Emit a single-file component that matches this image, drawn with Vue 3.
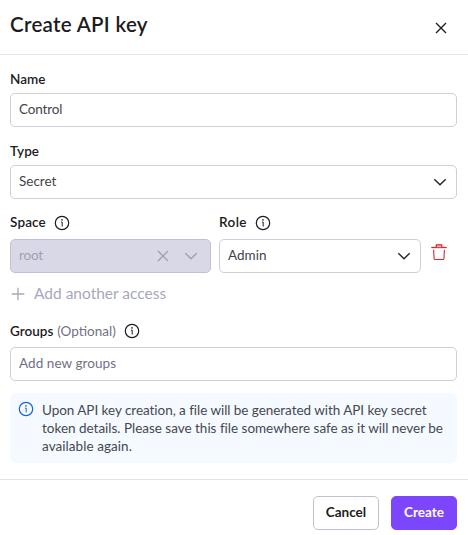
<script setup>
import { h } from 'vue'

const InfoIcon = () =>
  h('svg', { width: 16, height: 16, viewBox: '0 0 16 16', fill: 'none', stroke: 'currentColor' }, [
    h('circle', { cx: 8, cy: 8, r: 6.7, 'stroke-width': 1.2 }),
    h('path', { d: 'M7 7.1h1.2v4.4', 'stroke-width': 1 }),
    h('circle', { cx: 8, cy: 4.9, r: 0.8, fill: 'currentColor', stroke: 'none' }),
  ])

const ChevronIcon = () =>
  h('svg', { width: 16, height: 16, viewBox: '0 0 16 16', fill: 'none', stroke: 'currentColor' }, [
    h('path', { d: 'M2.3 5.2L8 10.8l5.7-5.6', 'stroke-width': 1.4 }),
  ])

const CloseIcon = () =>
  h('svg', { width: 16, height: 16, viewBox: '0 0 16 16', fill: 'none', stroke: 'currentColor' }, [
    h('path', { d: 'M3 3l10 10M13 3L3 13', 'stroke-width': 1.35 }),
  ])
</script>

<template>
  <section class="dialog">
    <header class="header">
      <h1 class="title">Create API key</h1>
      <CloseIcon class="close" />
    </header>

    <main class="body">
      <label class="label">Name</label>
      <div class="control"><span class="value control-name">Control</span></div>

      <label class="label spaced"><span class="type">Type</span></label>
      <div class="control">
        <span class="value">Secret</span>
        <ChevronIcon />
      </div>

      <div class="access">
        <div class="column">
          <label class="label"><span class="space">Space</span><InfoIcon /></label>
          <div class="control disabled">
            <span class="value root">root</span>
            <span class="tools"><CloseIcon /><ChevronIcon /></span>
          </div>
        </div>
        <div class="column">
          <label class="label"><span class="role">Role</span><InfoIcon /></label>
          <div class="control">
            <span class="value">Admin</span>
            <ChevronIcon />
          </div>
        </div>
        <svg class="trash" width="16" height="18" viewBox="0 0 16 18" fill="none" stroke="currentColor">
          <path d="M.3 4.5h15.4" stroke-width="1.3" />
          <path d="M5.3 4.2V1.8h5.4v2.4" stroke-width="1.2" fill="#f6bcc0" />
          <path d="M2.6 6.7l.5 9q.1.8.9.8h8q.8 0 .9-.8l.5-9" stroke-width="1.1" />
        </svg>
      </div>

      <div class="add">
        <svg width="16" height="16" viewBox="0 0 16 16" fill="none" stroke="currentColor">
          <path d="M8 1.7v12.6M1.7 8h12.6" stroke-width="1.3" />
        </svg>
        <span>Add another access</span>
      </div>

      <label class="label groups">
        Groups<span class="optional">(Optional)</span><InfoIcon />
      </label>
      <div class="control placeholder"><span class="value new-groups">Add new groups</span></div>

      <div class="alert">
        <InfoIcon class="alert-icon" />
        <p class="message">
          <span class="first">Upon API key creation, a file will be generated with API key secret</span>
          <span class="second">token details. Please save this file somewhere safe as it will never be</span>
          <span class="last">available again.</span>
        </p>
      </div>
    </main>

    <footer class="footer">
      <button class="button">Cancel</button>
      <button class="button primary">Create</button>
    </footer>
  </section>
</template>

<style>
body {
  background: #fff;
}
</style>

<style scoped>
.dialog {
  box-sizing: border-box;
  width: 468px;
  height: 535px;
  overflow: hidden;
  background: #fff;
  color: #1c1c22;
  font: 400 13.5px/20px Lato, "Open Sans", sans-serif;
  white-space: nowrap;
}
svg {
  display: block;
  flex: none;
}
.header {
  display: flex;
  justify-content: space-between;
  box-sizing: border-box;
  height: 55px;
  padding: 10px 19px 0 10px;
  border-bottom: 1px solid #e5e5ea;
}
.title {
  margin: 0;
  font-size: 20.5px;
  line-height: 28px;
  font-weight: 600;
  letter-spacing: 0.3px;
}
.close {
  margin-top: 10px;
}
.body {
  box-sizing: border-box;
  height: 424px;
  padding: 14px 11px 0 10px;
}
.label {
  display: flex;
  align-items: center;
  height: 20px;
  margin-bottom: 4px;
  font-weight: 600;
}
.label.spaced {
  margin-top: 14px;
}
.type {
  letter-spacing: 0.1px;
}
.space {
  letter-spacing: 0.15px;
}
.role {
  letter-spacing: 0.4px;
}
.label svg {
  margin-left: 8px;
}
.control {
  display: flex;
  align-items: center;
  justify-content: space-between;
  box-sizing: border-box;
  height: 34px;
  padding: 0 8px;
  border: 1px solid #cfcedb;
  border-radius: 5px;
  color: #25252a;
}
.value {
  margin-bottom: 2px;
  color: #44444a;
}
.control-name {
  letter-spacing: -0.15px;
}
.control.disabled {
  background: #d9d8e7;
  border-color: #c1bfd2;
  color: #a19fb5;
}
.disabled .value {
  color: #a19fb5;
  letter-spacing: -0.2px;
}
.placeholder .value {
  color: #737085;
}
.new-groups {
  letter-spacing: 0.06px;
}
.tools {
  display: flex;
  gap: 12px;
  margin-right: 3px;
}
.access {
  display: grid;
  grid-template-columns: 201px 202px 16px;
  column-gap: 8px;
  margin-top: 13px;
}
.access .label {
  height: 21px;
  margin-bottom: 6px;
}
.access .label span {
  margin-bottom: 2px;
}
.trash {
  margin: 31px 0 0 2px;
  color: #dc2430;
}
.add {
  display: flex;
  align-items: center;
  gap: 8px;
  height: 20px;
  margin-top: 11px;
  color: #a9a7bd;
  font-size: 15.5px;
}
.add span {
  margin-bottom: 2px;
}
.label.groups {
  margin-top: 17px;
  margin-bottom: 6px;
}
.optional {
  margin-left: 4px;
  color: #737085;
  font-weight: 400;
}
.alert {
  display: flex;
  gap: 8px;
  box-sizing: border-box;
  height: 70px;
  margin-top: 12px;
  padding: 8px;
  border-radius: 6px;
  background: #f4faff;
}
.alert-icon {
  color: #1764d8;
}
.message {
  margin: 0;
  line-height: 18px;
  color: #46484f;
}
.message span {
  display: block;
}
.message .first {
  letter-spacing: -0.045px;
}
.message .second {
  letter-spacing: -0.015px;
}
.message .last {
  letter-spacing: 0.06px;
}
.footer {
  display: flex;
  justify-content: flex-end;
  gap: 12px;
  box-sizing: border-box;
  height: 56px;
  padding: 16px 11px 0 0;
  border-top: 1px solid #e2e2e7;
}
.button {
  display: flex;
  align-items: center;
  justify-content: center;
  box-sizing: border-box;
  width: 66px;
  height: 34px;
  padding: 0 0 2px;
  border: 1px solid #c1bfd2;
  border-radius: 5px;
  background: #fff;
  color: #1c1c22;
  font: inherit;
  font-weight: 700;
}
.button.primary {
  border-color: #7c47fc;
  background: #7c47fc;
  color: #fff;
}
</style>
